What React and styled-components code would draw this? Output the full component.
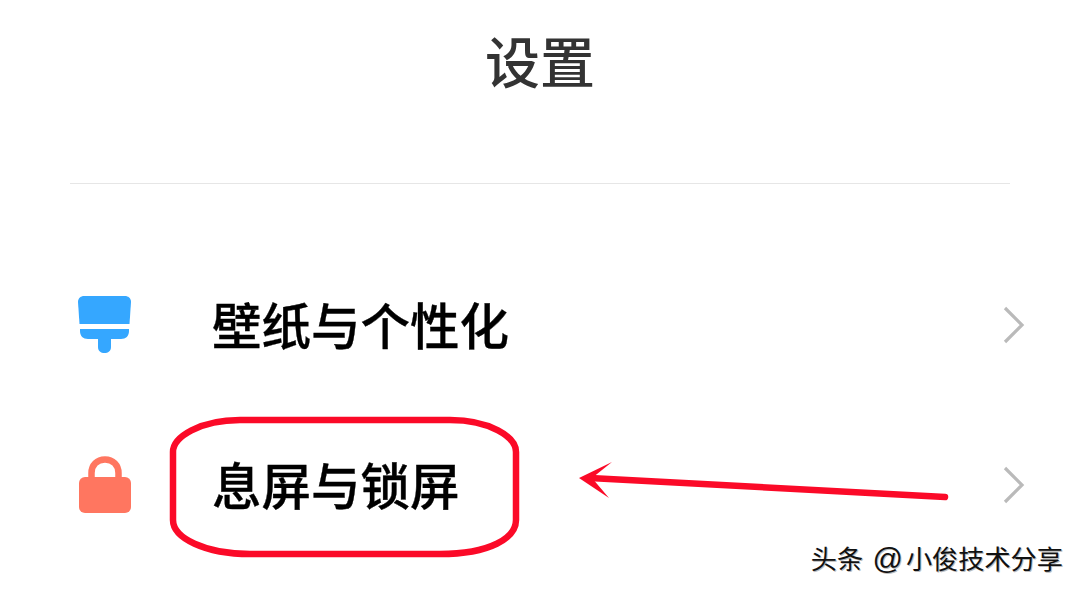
import styled, { createGlobalStyle } from 'styled-components';

const GlobalStyle = createGlobalStyle`
    html, body {
        margin: 0;
        background: #fff;
    }
`;

const Page = styled.div`
    position: relative;
    width: 1080px;
    height: 591px;
    overflow: hidden;
    background: #fff;
    font-family: 'Noto Sans CJK SC', 'Liberation Sans', sans-serif;
`;

const Header = styled.header`
    height: 184px;
    margin: 0 70px;
    box-sizing: border-box;
    padding-top: 21px;
    border-bottom: 1px solid #e6e6e6;
    text-align: center;
`;

const Title = styled.h1`
    margin: 0;
    font-size: 55px;
    line-height: 76px;
    font-weight: 500;
    color: #333;
`;

const List = styled.div`
    display: flex;
    flex-direction: column;
    gap: 80px;
    padding: 101px 54px 0 78px;
`;

const Row = styled.div`
    display: flex;
    align-items: center;
    height: 80px;
`;

const IconSlot = styled.div`
    width: 134px;
    flex: none;
    display: flex;
    align-items: center;
`;

const Label = styled.span`
    flex: 1;
    padding-bottom: 2px;
    font-size: 49.5px;
    line-height: 78px;
    font-weight: 500;
    color: #000;
    -webkit-text-stroke: 0.35px #000;
`;

const Overlay = styled.svg`
    position: absolute;
    left: 0;
    top: 0;
    pointer-events: none;
`;

const Watermark = styled.div`
    position: absolute;
    right: 17px;
    top: 542px;
    font-family: 'Liberation Sans', 'Noto Sans CJK SC', sans-serif;
    font-size: 26.2px;
    line-height: 36px;
    word-spacing: 2px;
    color: #111;
    white-space: nowrap;
    text-shadow: 1px 1px 0 #bbb;
`;

const WatermarkAt = styled.span`
    font-size: 30px;
    line-height: 30px;
    letter-spacing: 3px;
`;

const BrushIcon = () => (
    <svg width="54" height="58" viewBox="0 0 54 58">
        <path
            d="M6 0H47C50 0 53 2 53 6L51.500 28H1.500L0 6C0 2 3 0 6 0Z"
            fill="#35a7ff"
        />
        <path
            d="M2 33H51V35C51 40 48 43 43 43H33V51C33 55 30 57 26.500 57C23 57 20 55 20 51V43H10C5 43 2 40 2 35Z"
            fill="#35a7ff"
        />
    </svg>
);

const LockIcon = () => (
    <svg width="54" height="58" viewBox="0 0 54 58">
        <path
            d="M13.500 24V17C13.500 9 19 3.500 27 3.500C35 3.500 40.500 9 40.500 17V24"
            fill="none"
            stroke="#ff7660"
            strokeWidth="6.500"
        />
        <rect x="1" y="21" width="52" height="36" rx="6" fill="#ff7660" />
    </svg>
);

const Chevron = () => (
    <svg width="24" height="40" viewBox="0 0 24 40">
        <path d="M3 3L20 20L3 37" fill="none" stroke="#bababa" strokeWidth="3.200" />
    </svg>
);

const items = [
    { label: '壁纸与个性化', icon: <BrushIcon /> },
    { label: '息屏与锁屏', icon: <LockIcon /> },
];

const App = () => {
    return (
        <Page>
            <GlobalStyle />
            <Header>
                <Title>设置</Title>
            </Header>
            <List>
                {items.map((item) => (
                    <Row key={item.label}>
                        <IconSlot>{item.icon}</IconSlot>
                        <Label>{item.label}</Label>
                        <Chevron />
                    </Row>
                ))}
            </List>
            <Overlay width="1080" height="591" viewBox="0 0 1080 591">
                <path
                    d="M240 420H450C490 420 516 437 516 452V520C516 538 490 554 440 554H250C205 554 173 538 173 520V452C173 437 200 420 240 420Z"
                    fill="none"
                    stroke="#fb0a28"
                    strokeWidth="6.500"
                />
                <path d="M590 478L945 497" fill="none" stroke="#fb0a28" strokeWidth="6.500" strokeLinecap="round" />
                <path d="M579 478L612 462L592 478L609 498Z" fill="#fb0a28" />
            </Overlay>
            <Watermark>
                头条 <WatermarkAt>@</WatermarkAt>小俊技术分享
            </Watermark>
        </Page>
    );
};

export default App;
